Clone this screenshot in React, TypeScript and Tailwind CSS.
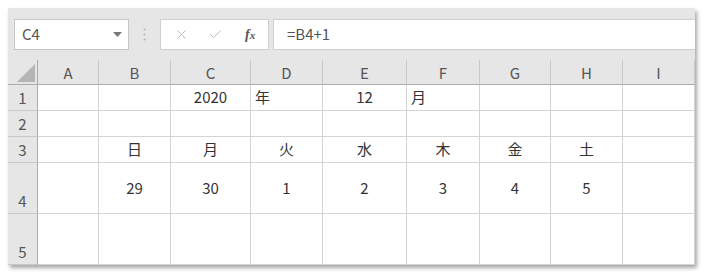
import { Check, X } from 'lucide-react';

const cols = ['A', 'B', 'C', 'D', 'E', 'F', 'G', 'H', 'I'];

type Cell = { text?: string; align?: 'center' | 'left' };

// rows of the sheet, one entry per column A..I
const rows: { height: string; cells: Cell[] }[] = [
  {
    height: 'h-[26px]',
    cells: [{}, {}, { text: '2020' }, { text: '年', align: 'left' }, { text: '12' }, { text: '月', align: 'left' }, {}, {}, {}],
  },
  { height: 'h-[26px]', cells: [{}, {}, {}, {}, {}, {}, {}, {}, {}] },
  {
    height: 'h-[26px]',
    cells: [{}, { text: '日' }, { text: '月' }, { text: '火' }, { text: '水' }, { text: '木' }, { text: '金' }, { text: '土' }, {}],
  },
  {
    height: 'h-[51px]',
    cells: [{}, { text: '29' }, { text: '30' }, { text: '1' }, { text: '2' }, { text: '3' }, { text: '4' }, { text: '5' }, {}],
  },
  { height: 'h-[51px]', cells: [{}, {}, {}, {}, {}, {}, {}, {}, {}] },
];

const font = "font-['Meiryo','Noto_Sans_CJK_JP',sans-serif]";

export default function App() {
  return (
    <div className="h-[276px] w-[705px] bg-white pl-2 pt-2">
      <div className={`flex h-[257px] w-[687px] flex-col bg-[#e6e6e6] shadow-[2px_3px_4px_rgba(0,0,0,0.35)] ${font} text-[15px] text-[#333]`}>
        {/* formula bar */}
        <div className="flex h-[52px] items-start pt-[11px]">
          <div className="ml-[6px] flex h-[31px] w-[115px] items-center justify-between border border-[#c6c6c6] bg-white pl-[7px] pr-[6px]">
            <span className="text-[#555]">C4</span>
            <svg width="9" height="5" viewBox="0 0 9 5">
              <path d="M0 0h9L4.5 5z" fill="#777" />
            </svg>
          </div>
          <div className="flex h-[31px] w-[31px] items-center justify-center">
            <svg width="3" height="13" viewBox="0 0 3 13">
              <circle cx="1.5" cy="1.5" r="1" fill="#b4b4b4" />
              <circle cx="1.5" cy="6.5" r="1" fill="#b4b4b4" />
              <circle cx="1.5" cy="11.5" r="1" fill="#b4b4b4" />
            </svg>
          </div>
          <div className="flex h-[31px] w-[109px] items-center border border-[#d0d0d0] bg-white pl-[13px]">
            <X className="h-[15px] w-[15px] text-[#b8b8b8]" strokeWidth={1.6} />
            <Check className="ml-[19px] h-[15px] w-[15px] text-[#b8b8b8]" strokeWidth={1.6} />
            <span className="ml-[22px] font-['Liberation_Serif',serif] text-[14px] font-bold italic text-[#555]">
              f<span className="text-[11px]">x</span>
            </span>
          </div>
          <div className="ml-[4px] flex h-[31px] flex-1 items-center border border-r-0 border-[#d0d0d0] bg-white pl-[13px] text-[#555]">
            =B4+1
          </div>
        </div>

        {/* sheet */}
        <div className="grid grid-cols-[30px_61px_72px_80px_72px_84px_73px_71px_72px_72px] bg-white">
          <div className="flex h-[25px] items-end justify-end border-b border-r border-[#ababab] bg-[#e6e6e6] pb-[2px] pr-[2px]">
            <svg width="18" height="18" viewBox="0 0 18 18">
              <path d="M18 0V18H0z" fill="#b5b5b5" />
            </svg>
          </div>
          {cols.map((c) => (
            <div
              key={c}
              className="flex h-[25px] items-center justify-center border-b border-r border-b-[#ababab] border-r-[#c8c8c8] bg-[#e6e6e6] pt-[2px] text-[#555]"
            >
              {c}
            </div>
          ))}

          {rows.map((r, ri) => (
            <div key={ri} className="contents">
              <div
                className={`flex ${r.height} items-end justify-center border-b border-r border-b-[#c8c8c8] border-r-[#ababab] bg-[#e6e6e6] pb-[1px] text-[#555]`}
              >
                {ri + 1}
              </div>
              {r.cells.map((cell, ci) => (
                <div
                  key={ci}
                  className={`flex ${r.height} items-center border-b border-r border-[#d4d4d4] ${
                    cell.align === 'left' ? 'justify-start pl-[4px]' : 'justify-center'
                  }`}
                >
                  {cell.text}
                </div>
              ))}
            </div>
          ))}
        </div>
      </div>
    </div>
  );
}
